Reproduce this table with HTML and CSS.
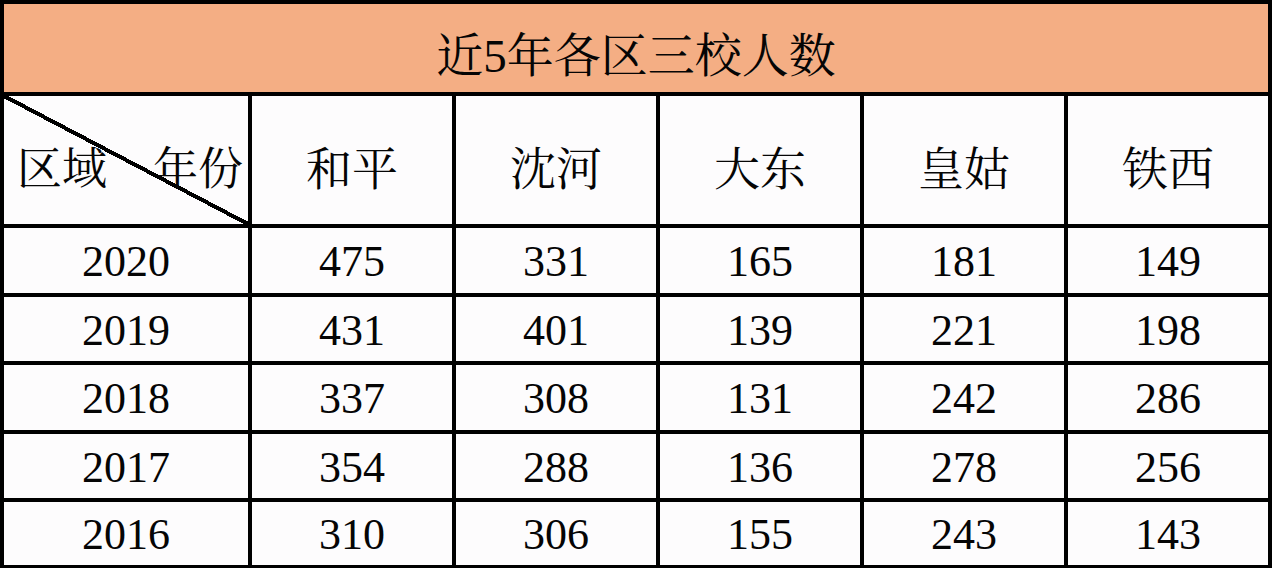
FILE: index.html
```html
<!DOCTYPE html>
<html lang="zh-CN">
<head>
<meta charset="utf-8">
<title>近5年各区三校人数</title>
<link rel="stylesheet" href="styles.css">
</head>
<body>
<div class="table">
  <div class="title">近5年各区三校人数</div>
  <div class="cell head corner"><span>区域</span><span>年份</span></div>
  <div class="cell head">和平</div>
  <div class="cell head">沈河</div>
  <div class="cell head">大东</div>
  <div class="cell head">皇姑</div>
  <div class="cell head">铁西</div>

  <div class="cell num">2020</div><div class="cell num">475</div><div class="cell num">331</div><div class="cell num">165</div><div class="cell num">181</div><div class="cell num">149</div>
  <div class="cell num">2019</div><div class="cell num">431</div><div class="cell num">401</div><div class="cell num">139</div><div class="cell num">221</div><div class="cell num">198</div>
  <div class="cell num">2018</div><div class="cell num">337</div><div class="cell num">308</div><div class="cell num">131</div><div class="cell num">242</div><div class="cell num">286</div>
  <div class="cell num">2017</div><div class="cell num">354</div><div class="cell num">288</div><div class="cell num">136</div><div class="cell num">278</div><div class="cell num">256</div>
  <div class="cell num">2016</div><div class="cell num">310</div><div class="cell num">306</div><div class="cell num">155</div><div class="cell num">243</div><div class="cell num">143</div>
</div>
</body>
</html>
```
FILE: styles.css
```css
html, body {
  margin: 0;
  padding: 0;
  background: #ffffff;
}

.table {
  display: grid;
  grid-template-columns: 244px repeat(5, 200px);
  grid-template-rows: 88px 128px 65px 64px 65px 64px 63px;
  gap: 4px;
  padding: 4px;
  width: 1264px;
  background: #000000;
  font-family: "Liberation Serif", "Noto Serif CJK SC", "Noto Sans CJK SC", serif;
  color: #050505;
}

.title {
  grid-column: 1 / -1;
  background: #f4ae84;
  display: flex;
  align-items: center;
  justify-content: center;
  font-size: 47px;
  padding-top: 6px;
  box-sizing: border-box;
}

.cell {
  background: #fdfcfd;
  display: flex;
  align-items: center;
  justify-content: center;
}

.head {
  font-size: 46px;
  padding-top: 10px;
  box-sizing: border-box;
}

.corner {
  font-size: 45px;
  justify-content: space-between;
  padding-left: 13px;
  padding-right: 5px;
  background:
    linear-gradient(to top right,
      transparent calc(50% - 2px),
      #000 calc(50% - 2px),
      #000 calc(50% + 2px),
      transparent calc(50% + 2px)),
    #fdfcfd;
}

.num {
  font-size: 44px;
  padding-top: 2px;
  box-sizing: border-box;
}
```
